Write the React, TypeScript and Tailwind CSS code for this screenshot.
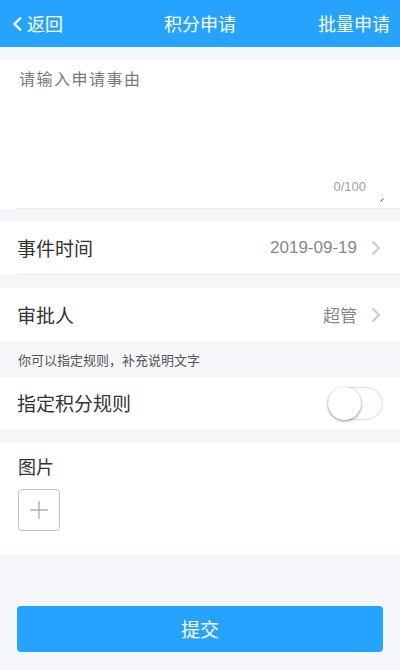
import React from "react";

const font = { fontFamily: '"Noto Sans CJK SC", "Liberation Sans", sans-serif' };

function Chevron() {
  return (
    <svg width="10" height="16" viewBox="0 0 10 16" className="ml-[14px]">
      <path d="M1.5 1.5 L8 8 L1.5 14.5" fill="none" stroke="#c8c8cd" strokeWidth="1.8" />
    </svg>
  );
}

export default function App() {
  return (
    <div className="w-[400px] h-[670px] bg-[#f5f6fa] flex flex-col" style={font}>
      {/* header */}
      <div className="h-[47px] bg-[#26a2ff] flex items-center justify-between px-[10px] text-white text-[18px] relative">
        <div className="flex items-center">
          <svg width="12" height="16" viewBox="0 0 12 16" className="ml-[2px] mr-[3px]">
            <path d="M9 1.5 L2.5 8 L9 14.5" fill="none" stroke="#fff" strokeWidth="2.4" />
          </svg>
          <span>返回</span>
        </div>
        <span className="absolute left-1/2 -translate-x-1/2">积分申请</span>
        <span>批量申请</span>
      </div>

      {/* textarea */}
      <div className="mt-[13px] bg-white pl-[17px]">
        <div className="relative h-[149px] border-b border-[#e8e8e8]">
          <textarea
            className="w-[366px] h-[141px] pt-[6px] pl-[2px] text-[16px] tracking-[1.5px] outline-none resize-none placeholder:text-[#7a7a7a] text-[#333] block"
            style={font}
            placeholder="请输入申请事由"
          />
          <span className="absolute right-[34px] top-[117px] text-[13px] text-[#a0a0a0]" style={{ fontFamily: '"Liberation Sans", sans-serif' }}>
            0/100
          </span>
          <svg width="4" height="4" viewBox="0 0 4 4" className="absolute left-[363px] top-[138px]">
            <path d="M3.5 0.5 L0.5 3.5" stroke="#555" strokeWidth="1" />
          </svg>
        </div>
      </div>

      {/* event time */}
      <div className="mt-[13px] bg-white pl-[17px]">
        <div className="h-[53px] border-b border-[#e8e8e8] flex items-center justify-between pr-[19px]">
          <span className="text-[19px] text-[#333]">事件时间</span>
          <div className="flex items-center">
            <span className="text-[17px] text-[#888]" style={{ fontFamily: '"Liberation Sans", sans-serif' }}>2019-09-19</span>
            <Chevron />
          </div>
        </div>
      </div>

      {/* approver */}
      <div className="mt-[13px] bg-white pl-[17px] h-[54px] flex items-center justify-between pr-[19px]">
        <span className="text-[19px] text-[#333]">审批人</span>
        <div className="flex items-center">
          <span className="text-[17px] text-[#888]">超管</span>
          <Chevron />
        </div>
      </div>

      {/* tip */}
      <div className="h-[35px] flex items-center pl-[18px] text-[13px] text-[#555]">
        你可以指定规则，补充说明文字
      </div>

      {/* toggle row */}
      <div className="bg-white h-[53px] pl-[17px] pr-[17px] flex items-center justify-between">
        <span className="text-[19px] text-[#333]">指定积分规则</span>
        <div className="w-[55px] h-[33px] rounded-full border border-[#dcdcdc] bg-[#fdfdfd] relative">
          <div className="absolute left-[-1px] top-[-1px] w-[33px] h-[33px] rounded-full bg-white shadow-[0_1px_3px_rgba(0,0,0,0.45)]" />
        </div>
      </div>

      {/* images */}
      <div className="mt-[13px] bg-white h-[112px] pl-[18px] pt-[10px]">
        <div className="text-[18px] text-[#333] leading-[26px]">图片</div>
        <div className="mt-[10px] w-[42px] h-[42px] rounded-[4px] border border-[#c2c2c6] flex items-center justify-center">
          <svg width="20" height="20" viewBox="0 0 20 20">
            <path d="M10 1 V19 M1 10 H19" stroke="#b0b0b4" strokeWidth="1.4" />
          </svg>
        </div>
      </div>

      {/* button */}
      <div className="px-[17px] mt-[51px]">
        <button className="w-full h-[46px] rounded-[4px] bg-[#26a2ff] text-white text-[19px]" style={font}>
          提交
        </button>
      </div>
    </div>
  );
}
